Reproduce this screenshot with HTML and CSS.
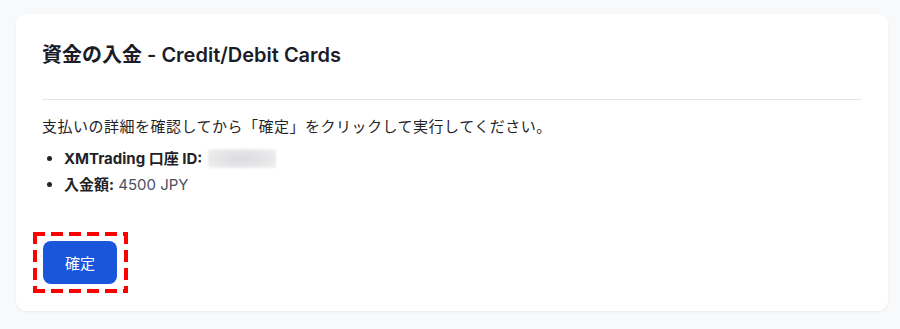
FILE: index.html
```html
<!DOCTYPE html>
<html lang="ja">
<head>
    <meta charset="UTF-8">
    <meta name="viewport" content="width=device-width, initial-scale=1.0">
    <title>資金の入金</title>
    <link rel="stylesheet" href="styles.css">
</head>
<body>

    <!-- Deposit confirmation card -->
    <div class="card">
        <div class="card-header">
            <h2 class="title">資金の入金 - Credit/Debit Cards</h2>
        </div>

        <p class="lead">支払いの詳細を確認してから「確定」をクリックして実行してください。</p>

        <ul class="details">
            <li><strong>XMTrading 口座 ID:</strong> <span class="masked"></span></li>
            <li><strong>入金額:</strong> <span class="value">4500 JPY</span></li>
        </ul>

        <div class="highlight">
            <button class="confirm-btn">確定</button>
        </div>
    </div>

</body>
</html>
```

FILE: styles.css
```css
* {
    margin: 0;
    padding: 0;
    box-sizing: border-box;
}

body {
    background: #f8f9fb;
    font-family: Inter, "Noto Sans CJK JP", sans-serif;
    color: #1f2328;
    padding: 14px 12px 18px 16px;
}

/* White card */
.card {
    background: #fff;
    border-radius: 10px;
    box-shadow: 0 1px 3px rgba(0, 0, 0, 0.06);
    padding: 27px 27px 18px 26px;
}

.card-header {
    padding-bottom: 30px;
    border-bottom: 1px solid #e5e5e5;
}

.title {
    font-size: 20px;
    font-weight: 600;
    line-height: 28px;
    color: #1a1d29;
}

.lead {
    margin-top: 16px;
    font-size: 15px;
    line-height: 22px;
    letter-spacing: 0.5px;
}

/* Payment details list */
.details {
    margin-top: 8px;
    padding-left: 22px;
    font-size: 15px;
    line-height: 26px;
}

.details li strong {
    font-weight: 700;
}

.details .value {
    color: #4b5060;
}

.masked {
    display: inline-block;
    width: 68px;
    height: 19px;
    vertical-align: -4px;
    margin-left: 1px;
    background: radial-gradient(ellipse at center, #dcdcde 0%, #e6e6e8 55%, #f2f2f3 100%);
    filter: blur(1px);
}

/* Red dashed annotation round the button */
.highlight {
    display: inline-block;
    margin-top: 34px;
    margin-left: -9px;
    padding: 9px 11px 9px 10px;
    background:
        repeating-linear-gradient(90deg, #ff0000 0 12px, transparent 12px 18px) top left / 100% 4px no-repeat,
        repeating-linear-gradient(90deg, #ff0000 0 12px, transparent 12px 18px) bottom left / 100% 4px no-repeat,
        repeating-linear-gradient(180deg, #ff0000 0 12px, transparent 12px 18px) top left / 4px 100% no-repeat,
        repeating-linear-gradient(180deg, #ff0000 0 12px, transparent 12px 18px) top right / 4px 100% no-repeat;
}

.confirm-btn {
    display: block;
    width: 74px;
    height: 43px;
    background: #1a56db;
    color: #fff;
    border: none;
    border-radius: 8px;
    font-family: Inter, "Noto Sans CJK JP", sans-serif;
    font-size: 15px;
    cursor: pointer;
}
```
